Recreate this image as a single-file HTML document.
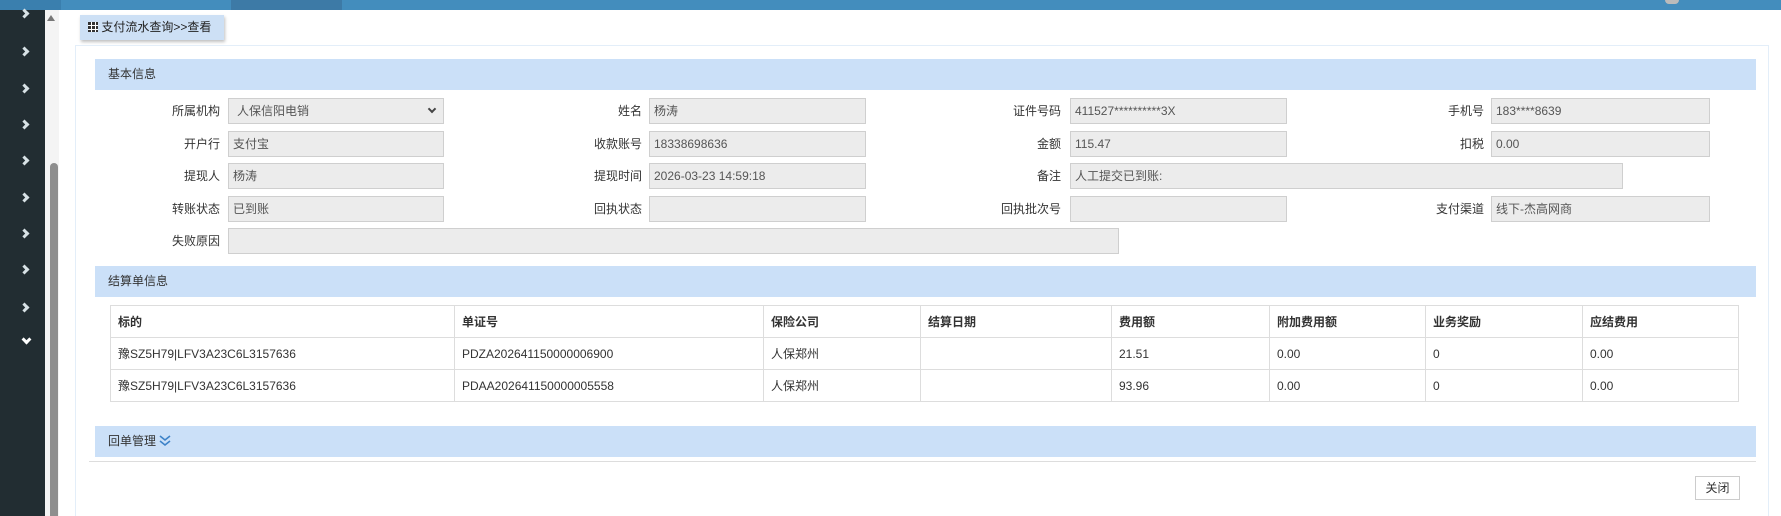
<!DOCTYPE html>
<html style="overflow:hidden;width:1781px;height:516px"><head><meta charset="utf-8">
<style>
*{margin:0;padding:0;box-sizing:border-box}
body{width:1781px;height:516px;overflow:hidden;background:#fff;font-family:"Liberation Sans","Noto Sans CJK SC",sans-serif;font-size:12px;color:#333;position:relative}
.abs{position:absolute}
.top{left:0;top:0;width:1781px;height:10px;background:#438dbd}
.side{left:0;top:10px;width:45px;height:506px;background:#222d32}
.chev{position:absolute;left:21px;width:7px;height:7px;border-right:3px solid #d8e2e6;border-bottom:3px solid #d8e2e6;transform:rotate(-45deg)}
.scr{left:45px;top:10px;width:14px;height:506px;background:#f4f4f4}
.hdr{position:absolute;left:95px;width:1661px;height:31px;background:#cbe0f8;font-size:12px;line-height:31px;padding-left:13px;color:#333}
.lbl{position:absolute;text-align:right;width:120px;line-height:26px}
.inp{position:absolute;height:26px;background:#ececec;border:1px solid #cfcfcf;line-height:24px;padding-left:4px;color:#555}
table{position:absolute;left:110px;top:305px;width:1629px;border-collapse:collapse}
td,th{border:1px solid #ddd;height:32px;padding-left:7px;text-align:left;font-size:12px;color:#333}
th{font-weight:bold}
</style></head><body>
<div class="abs top"></div>
<div class="abs" style="left:0;top:0;width:61px;height:10px;background:#3a7fae"></div>
<div class="abs" style="left:231px;top:0;width:111px;height:10px;background:#3d7aa6"></div>
<div class="abs side">
<div class="chev" style="top:0px"></div>
<div class="chev" style="top:38px"></div>
<div class="chev" style="top:75px"></div>
<div class="chev" style="top:111px"></div>
<div class="chev" style="top:147px"></div>
<div class="chev" style="top:184px"></div>
<div class="chev" style="top:220px"></div>
<div class="chev" style="top:256px"></div>
<div class="chev" style="top:294px"></div>
<div class="chev" style="top:326px;left:23px;transform:rotate(45deg);border-color:#fff"></div>
</div>
<div class="abs scr"></div>
<div class="abs" style="left:47px;top:15px;width:0;height:0;border-left:4px solid transparent;border-right:4px solid transparent;border-bottom:6px solid #777"></div>
<div class="abs" style="left:50px;top:163px;width:8px;height:353px;background:#8e8e8e;border-radius:4px 4px 0 0"></div>

<div class="abs" style="left:80px;top:15px;width:144px;height:25px;background:#cde0f5;box-shadow:1px 2px 3px rgba(0,0,0,.25);line-height:25px;padding-left:8px;font-size:12px;color:#222">
<span style="display:inline-block;width:10px;height:10px;vertical-align:-1px;background:
linear-gradient(#fff,#fff) 3px 0/1px 10px no-repeat,linear-gradient(#fff,#fff) 7px 0/1px 10px no-repeat,linear-gradient(#fff,#fff) 0 3px/10px 1px no-repeat,linear-gradient(#fff,#fff) 0 7px/10px 1px no-repeat,#333"></span> 支付流水查询&gt;&gt;查看</div>

<div class="abs" style="left:75px;top:45px;width:1694px;height:471px;border:1px solid #e3eef9;border-bottom:none"></div>

<div class="hdr" style="top:59px">基本信息</div>

<div class="lbl" style="left:100px;top:98px">所属机构</div>
<div class="inp" style="left:228px;top:98px;width:216px;padding-left:8px">人保信阳电销<span style="position:absolute;right:8px;top:7px;width:6px;height:6px;border-right:2px solid #444;border-bottom:2px solid #444;transform:rotate(45deg)"></span></div>
<div class="lbl" style="left:522px;top:98px">姓名</div>
<div class="inp" style="left:649px;top:98px;width:217px">杨涛</div>
<div class="lbl" style="left:941px;top:98px">证件号码</div>
<div class="inp" style="left:1070px;top:98px;width:217px">411527**********3X</div>
<div class="lbl" style="left:1364px;top:98px">手机号</div>
<div class="inp" style="left:1491px;top:98px;width:219px">183****8639</div>

<div class="lbl" style="left:100px;top:131px">开户行</div>
<div class="inp" style="left:228px;top:131px;width:216px">支付宝</div>
<div class="lbl" style="left:522px;top:131px">收款账号</div>
<div class="inp" style="left:649px;top:131px;width:217px">18338698636</div>
<div class="lbl" style="left:941px;top:131px">金额</div>
<div class="inp" style="left:1070px;top:131px;width:217px">115.47</div>
<div class="lbl" style="left:1364px;top:131px">扣税</div>
<div class="inp" style="left:1491px;top:131px;width:219px">0.00</div>

<div class="lbl" style="left:100px;top:163px">提现人</div>
<div class="inp" style="left:228px;top:163px;width:216px">杨涛</div>
<div class="lbl" style="left:522px;top:163px">提现时间</div>
<div class="inp" style="left:649px;top:163px;width:217px">2026-03-23 14:59:18</div>
<div class="lbl" style="left:941px;top:163px">备注</div>
<div class="inp" style="left:1070px;top:163px;width:553px">人工提交已到账:</div>

<div class="lbl" style="left:100px;top:196px">转账状态</div>
<div class="inp" style="left:228px;top:196px;width:216px">已到账</div>
<div class="lbl" style="left:522px;top:196px">回执状态</div>
<div class="inp" style="left:649px;top:196px;width:217px"></div>
<div class="lbl" style="left:941px;top:196px">回执批次号</div>
<div class="inp" style="left:1070px;top:196px;width:217px"></div>
<div class="lbl" style="left:1364px;top:196px">支付渠道</div>
<div class="inp" style="left:1491px;top:196px;width:219px">线下-杰高网商</div>

<div class="lbl" style="left:100px;top:228px">失败原因</div>
<div class="inp" style="left:228px;top:228px;width:891px"></div>

<div class="hdr" style="top:266px">结算单信息</div>

<table>
<tr><th style="width:344px">标的</th><th style="width:309px">单证号</th><th style="width:157px">保险公司</th><th style="width:191px">结算日期</th><th style="width:158px">费用额</th><th style="width:156px">附加费用额</th><th style="width:157px">业务奖励</th><th>应结费用</th></tr>
<tr><td>豫SZ5H79|LFV3A23C6L3157636</td><td>PDZA202641150000006900</td><td>人保郑州</td><td></td><td>21.51</td><td>0.00</td><td>0</td><td>0.00</td></tr>
<tr><td>豫SZ5H79|LFV3A23C6L3157636</td><td>PDAA202641150000005558</td><td>人保郑州</td><td></td><td>93.96</td><td>0.00</td><td>0</td><td>0.00</td></tr>
</table>

<div class="hdr" style="top:426px">回单管理 <svg width="12" height="14" viewBox="0 0 12 14" style="vertical-align:-3px"><path d="M1 2l5 4 5-4M1 7l5 4 5-4" fill="none" stroke="#3d82c8" stroke-width="1.6"/></svg></div>
<div class="abs" style="left:89px;top:461px;width:1667px;height:1px;background:#ddd"></div>

<div class="abs" style="left:1695px;top:476px;width:45px;height:24px;border:1px solid #ccc;background:#fff;text-align:center;line-height:22px;font-size:12px">关闭</div>
<div class="abs" style="left:1665px;top:0;width:14px;height:4px;background:#bbb;border-radius:0 0 7px 7px"></div>
</body></html>
